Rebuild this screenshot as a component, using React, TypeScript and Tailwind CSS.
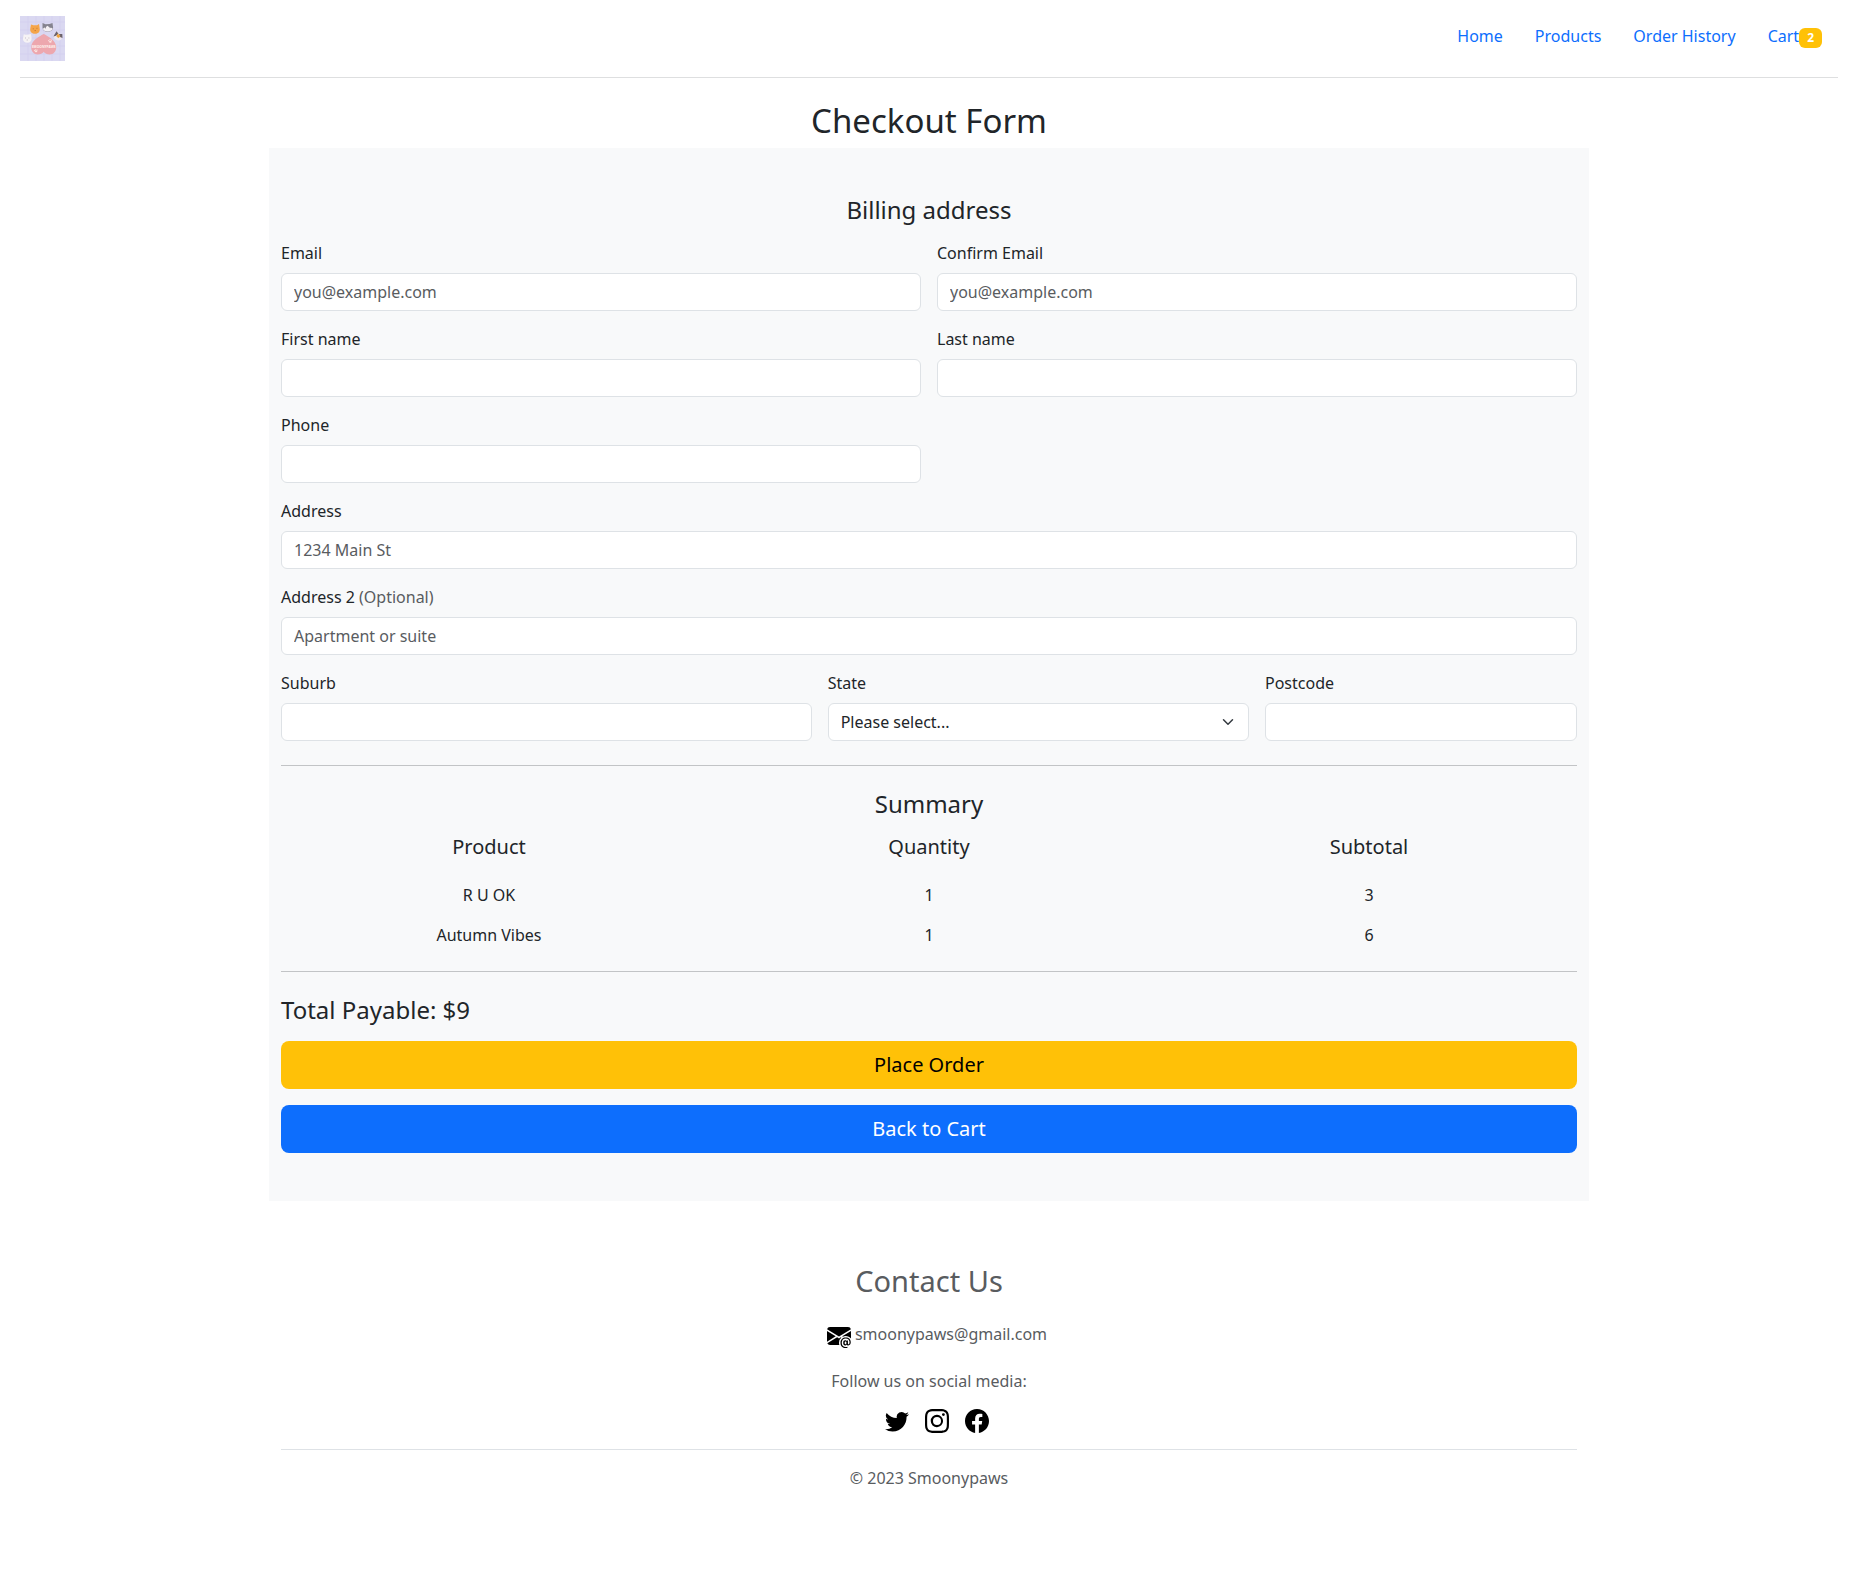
import type { ReactNode } from "react";
import { BsEnvelopeAtFill, BsFacebook, BsInstagram, BsTwitter } from "react-icons/bs";

const control =
  "block h-[38px] w-full rounded-md border border-[#dee2e6] bg-white px-3 text-base leading-6 text-[#212529] placeholder:text-[#595c5f]";

function Logo() {
  return (
    <svg viewBox="0 0 45 45" className="size-[45px]" role="img" aria-label="Smoonypaws">
      <rect width="45" height="45" fill="#dad8f1" />
      <path d="M8 0v45M16 0v45M24 0v45M32 0v45M40 0v45M0 6h45M0 14h45M0 22h45M0 30h45M0 38h45" stroke="#d0cdee" strokeWidth="0.6" />
      <path d="M23.700 18C20 20 11.200 24 11.200 31.500c0 4.200 3 7 6.500 7 2.600 0 4.800-1 6-2.700 1.200 1.700 3.400 2.700 6 2.700 3.500 0 6.500-2.800 6.500-7C36.200 24 27.500 20 23.700 18z" fill="#eda7ae" />
      <path d="M11 8.500l2.500.8 3.500-.1 2-1.200.6 4c.8 3.300-1 5.800-4.400 5.800s-5.200-2-5-4.800z" fill="#f5a54a" />
      <path d="M12.800 12.800h.9M16.500 12.300h.9M14.600 14.600h1.200" stroke="#b06a30" strokeWidth="0.8" />
      <path d="M22.500 7l3 1.300 4-.2 3-1.200.6 4.800c-.2 2.800-2.400 4-5.400 4s-5-1.400-5.200-4z" fill="#85838f" />
      <path d="M22.800 13c1-1.500 3.300-1.300 4.600-3.200 1.500 1.700 4.200 1.500 5.400 3-1.300 3.600-8.500 3.600-10 .2z" fill="#f4f0f4" />
      <path d="M25 11.800h.9M29.600 11.600h.9" stroke="#4d4650" strokeWidth="0.8" />
      <path d="M3.800 18.300l2 .5 2.700-.4 2.500-.4.600 4.300c0 2.900-1.700 4.500-4.200 4.500S3 25.300 2.900 22.800z" fill="#f6f3f5" />
      <path d="M5 22h.8M8.500 22h.8M6.700 24h1" stroke="#a59aa5" strokeWidth="0.7" />
      <path d="M36.500 15.800l5.500 2.600.2 3.200c-.6 2.700-2.700 3.600-5 2.600-2.200-.8-3.700-2-3.600-4z" fill="#efe8ee" />
      <path d="M36.500 15.200l2 2.500-2.500 2-2.600.8zM39 18l3.300 0 .2 4-2.500-1z" fill="#6b626c" />
      <path d="M37.500 17.500l3 2.500-1.800 2-2.200-1.200z" fill="#efa23a" />
      <g fill="#fbe3e0">
        <ellipse cx="30.300" cy="25.700" rx="1.300" ry="1" />
        <circle cx="28.700" cy="24.700" r=".6" />
        <circle cx="30" cy="23.700" r=".6" />
        <circle cx="31.500" cy="24.200" r=".6" />
        <ellipse cx="16" cy="35.300" rx="1.300" ry="1" />
        <circle cx="14.500" cy="34.300" r=".6" />
        <circle cx="15.800" cy="33.500" r=".6" />
        <circle cx="17.200" cy="34" r=".6" />
      </g>
      <text x="23.700" y="31.500" textAnchor="middle" fontSize="3.300" fontWeight="700" fill="#fff3ee" fontFamily="Noto Sans, sans-serif">
        SMOONYPAWS
      </text>
    </svg>
  );
}

function Field({ id, label, note, className, children }: { id: string; label: string; note?: string; className: string; children?: ReactNode }) {
  return (
    <div className={className}>
      <label htmlFor={id} className="mb-2 block">
        {label}
        {note && <span className="text-[#595c5f]"> {note}</span>}
      </label>
      {children}
    </div>
  );
}

function TextField({ id, label, note, className, type = "text", placeholder }: { id: string; label: string; note?: string; className: string; type?: string; placeholder?: string }) {
  return (
    <Field id={id} label={label} note={note} className={className}>
      <input id={id} type={type} placeholder={placeholder} className={control} />
    </Field>
  );
}

const items = [
  { product: "R U OK", quantity: 1, subtotal: 3 },
  { product: "Autumn Vibes", quantity: 1, subtotal: 6 },
];

export default function App() {
  return (
    <div className="bg-white font-['Noto_Sans',sans-serif] text-base leading-6 text-[#212529]">
      <header className="mx-5 flex items-start justify-between border-b border-[#dedfe0] py-4">
        <a href="#home">
          <Logo />
        </a>
        <nav className="flex text-[#0d6efd]">
          <a href="#home" className="px-4 py-2">Home</a>
          <a href="#products" className="px-4 py-2">Products</a>
          <a href="#orders" className="px-4 py-2">Order History</a>
          <a href="#cart" className="flex items-start px-4 py-2">
            Cart
            <span className="mt-1 rounded-md bg-[#ffc107] px-2 py-1 text-xs leading-3 font-bold text-white">2</span>
          </a>
        </nav>
      </header>

      <main className="mx-auto mt-6 max-w-[1320px]">
        <h1 className="mb-2 text-center text-[33px] leading-[38px]">Checkout Form</h1>
        <form className="bg-[#f8f9fa] px-3 py-12" onSubmit={(e) => e.preventDefault()}>
          <h2 className="mb-[17px] text-center text-2xl leading-7">Billing address</h2>
          <div className="grid grid-cols-12 gap-4">
            <TextField id="email" label="Email" type="email" placeholder="you@example.com" className="col-span-6" />
            <TextField id="confirm" label="Confirm Email" type="email" placeholder="you@example.com" className="col-span-6" />
            <TextField id="first" label="First name" className="col-span-6" />
            <TextField id="last" label="Last name" className="col-span-6" />
            <TextField id="phone" label="Phone" type="tel" className="col-span-6" />
            <TextField id="address" label="Address" placeholder="1234 Main St" className="col-span-12" />
            <TextField id="address2" label="Address 2" note="(Optional)" placeholder="Apartment or suite" className="col-span-12" />
            <TextField id="suburb" label="Suburb" className="col-span-5" />
            <Field id="state" label="State" className="col-span-4">
              <div className="relative">
                <select id="state" className={`${control} appearance-none`}>
                  <option>Please select...</option>
                  <option>NSW</option>
                  <option>QLD</option>
                  <option>VIC</option>
                </select>
                <svg viewBox="0 0 16 16" className="pointer-events-none absolute top-[13px] right-[15px] size-3" fill="none" stroke="#343a40" strokeWidth="2" strokeLinecap="round" strokeLinejoin="round">
                  <path d="m2 5 6 6 6-6" />
                </svg>
              </div>
            </Field>
            <TextField id="postcode" label="Postcode" className="col-span-3" />
          </div>

          <hr className="my-6 border-[#c2c4c6]" />

          <h2 className="mb-[9px] text-center text-2xl leading-7">Summary</h2>
          <div className="-mx-3">
            <table className="w-full table-fixed text-center">
              <thead>
                <tr className="text-xl leading-6">
                  <th className="pt-2 pb-4 font-normal">Product</th>
                  <th className="pt-2 pb-4 font-normal">Quantity</th>
                  <th className="pt-2 pb-4 font-normal">Subtotal</th>
                </tr>
              </thead>
              <tbody>
                {items.map((item) => (
                  <tr key={item.product}>
                    <td className="py-2">{item.product}</td>
                    <td className="py-2">{item.quantity}</td>
                    <td className="py-2">{item.subtotal}</td>
                  </tr>
                ))}
              </tbody>
            </table>
          </div>

          <hr className="mt-4 mb-6 border-[#c2c4c6]" />

          <h2 className="mb-[17px] text-2xl leading-7">Total Payable: $9</h2>
          <button type="submit" className="mb-4 block h-12 w-full rounded-lg bg-[#ffc107] text-xl text-black">Place Order</button>
          <button type="button" className="block h-12 w-full rounded-lg bg-[#0d6efd] text-xl text-white">Back to Cart</button>
        </form>
      </main>

      <footer className="mx-auto max-w-[1320px] px-3 pt-16 pb-12 text-center text-[#595c5f]">
        <h2 className="text-[29px] leading-8">Contact Us</h2>
        <p className="mt-[25px] flex justify-center gap-1 pl-4">
          <BsEnvelopeAtFill className="mt-0.5 size-6 text-black" />
          <a href="mailto:smoonypaws@gmail.com">smoonypaws@gmail.com</a>
        </p>
        <p className="mt-[21px]">Follow us on social media:</p>
        <div className="flex justify-center gap-4 border-b border-[#dee2e6] py-4 pl-4 text-black">
          <a href="#twitter" aria-label="Twitter"><BsTwitter className="size-6" /></a>
          <a href="#instagram" aria-label="Instagram"><BsInstagram className="size-6" /></a>
          <a href="#facebook" aria-label="Facebook"><BsFacebook className="size-6" /></a>
        </div>
        <p className="mt-4">© 2023 Smoonypaws</p>
      </footer>
    </div>
  );
}
